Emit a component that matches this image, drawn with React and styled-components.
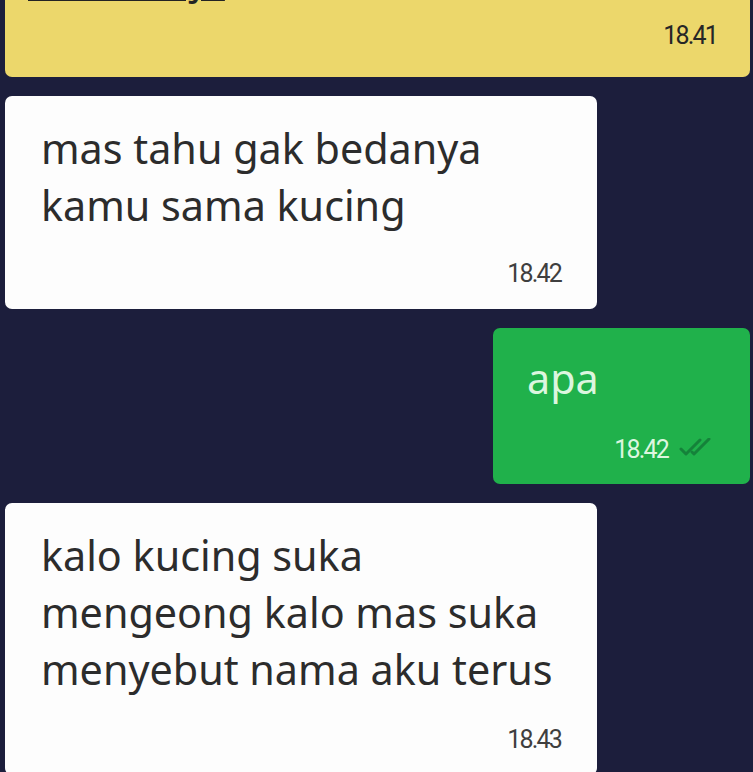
import React from "react";
import styled, { createGlobalStyle, css } from "styled-components";

const GlobalStyle = createGlobalStyle`
  html, body {
    margin: 0;
    padding: 0;
    background: #1c1e3c;
    overflow: hidden;
  }
  * { box-sizing: border-box; }
`;

const Screen = styled.main`
  height: 100vh;
  overflow: hidden;
  background: #1c1e3c;
`;

const Thread = styled.div`
  display: flex;
  flex-direction: column;
  gap: 19px;
  margin-top: -72px;
  padding: 0 3px 0 5px;
`;

const tones = {
  note: css`
    background: #ecd76b;
    color: #232323;
    width: 100%;
    padding: 22px 33px 27px 23px;
  `,
  in: css`
    background: #fdfdfd;
    color: #2c2c2c;
    width: 592px;
    padding: 24px 36px 21px 36px;
  `,
  out: css`
    background: #20b14b;
    color: #dcf6df;
    width: 257px;
    align-self: flex-end;
    padding: 22px 33px 20px 34px;
  `,
};

const Bubble = styled.div`
  display: flex;
  flex-direction: column;
  border-radius: 7px;
  ${({ $tone }) => tones[$tone]}
`;

const Text = styled.div`
  font-family: "Noto Sans", "Open Sans", sans-serif;
  font-size: 41.3px;
  line-height: 57px;
  white-space: pre-line;
`;

const LinkText = styled(Text)`
  text-decoration: underline;
  text-decoration-thickness: 3px;
  text-underline-offset: 4px;
`;

const Meta = styled.div`
  display: flex;
  justify-content: flex-end;
  align-items: center;
  gap: 11px;
  margin-top: ${({ $gap }) => $gap}px;
`;

const Time = styled.span`
  font-family: Roboto, "Liberation Sans", sans-serif;
  font-size: 25px;
  line-height: 29px;
  letter-spacing: -1.8px;
  color: ${({ $color }) => $color};
`;

const Ticks = styled.svg`
  width: 38px;
  height: 19px;
  flex: none;
  margin-top: -4px;
`;

function ReadTicks() {
  return (
    <Ticks viewBox="0 0 38 19" fill="none">
      <path
        d="M2 11 L7 16 L21 2"
        stroke="#15823a"
        strokeWidth="3"
        strokeLinecap="round"
        strokeLinejoin="round"
      />
      <path
        d="M13 14 L15 16 L30 1"
        stroke="#15823a"
        strokeWidth="3"
        strokeLinecap="round"
        strokeLinejoin="round"
      />
    </Ticks>
  );
}

export default function App() {
  return (
    <>
      <GlobalStyle />
      <Screen>
        <Thread>
          <Bubble $tone="note">
            <LinkText>kamu saja</LinkText>
            <Meta $gap={14}>
              <Time $color="#262626">18.41</Time>
            </Meta>
          </Bubble>

          <Bubble $tone="in">
            <Text>{"mas tahu gak bedanya\nkamu sama kucing"}</Text>
            <Meta $gap={25}>
              <Time $color="#3f3f3f">18.42</Time>
            </Meta>
          </Bubble>

          <Bubble $tone="out">
            <Text>apa</Text>
            <Meta $gap={28}>
              <Time $color="#dcf6df">18.42</Time>
              <ReadTicks />
            </Meta>
          </Bubble>

          <Bubble $tone="in">
            <Text>
              {"kalo kucing suka\nmengeong kalo mas suka\nmenyebut nama aku terus"}
            </Text>
            <Meta $gap={27}>
              <Time $color="#3f3f3f">18.43</Time>
            </Meta>
          </Bubble>
        </Thread>
      </Screen>
    </>
  );
}
